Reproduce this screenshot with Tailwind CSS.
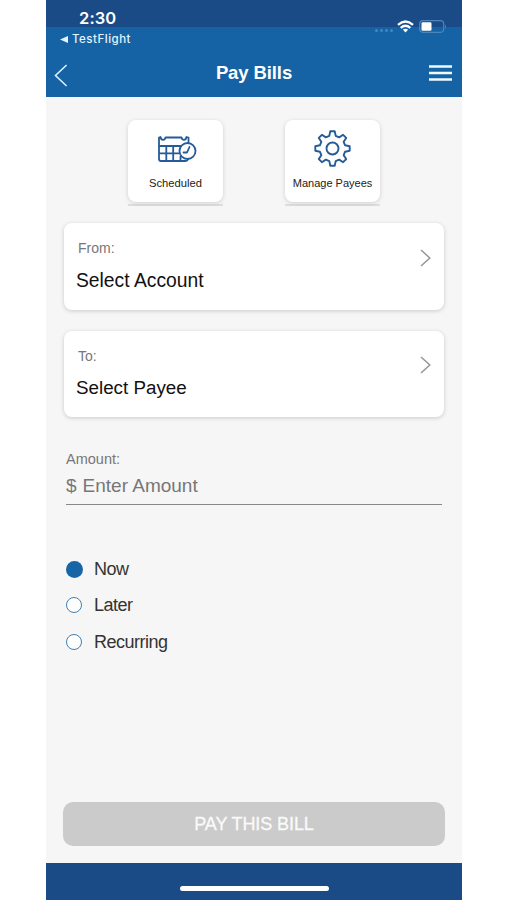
<!DOCTYPE html>
<html lang="en">
<head>
<meta charset="utf-8">
<title>Pay Bills</title>
<script src="https://cdn.jsdelivr.net/npm/@tailwindcss/browser@4"></script>
</head>
<body class="bg-white">
<div class="ml-[46px] flex h-[900px] w-[416px] flex-col overflow-hidden bg-[#f6f6f6] font-['Liberation_Sans',Arial,sans-serif]">
  <header class="flex h-[97px] shrink-0 flex-col bg-linear-to-b from-[#1a4b87] from-[27px] to-[#1563a4] to-[27px] text-white">
    <div class="flex h-[50px] items-start justify-between pr-[15px] pl-[14px] font-['Inter',sans-serif]">
      <div class="pt-[9px]">
        <div class="pl-[19px] text-[16.5px] leading-[18px] font-semibold tracking-[0.1px]">2:30</div>
        <div class="mt-[5px] flex items-center gap-[4px] text-[11.5px] leading-[14px] font-medium tracking-[0.5px] text-[#e3f4ff]">
          <svg class="h-[7px] w-[8px]" viewBox="0 0 8 7" fill="currentColor"><path d="M8 0v7L0 3.5z"/></svg>
          <span>TestFlight</span>
        </div>
      </div>
      <div class="mt-[20px] flex h-[13px] items-center gap-[5px]">
        <div class="mt-[8px] flex gap-[2px]">
          <span class="size-[3px] rounded-full bg-[#4686bd]"></span><span class="size-[3px] rounded-full bg-[#4686bd]"></span><span class="size-[3px] rounded-full bg-[#4686bd]"></span><span class="size-[3px] rounded-full bg-[#4686bd]"></span>
        </div>
        <svg class="-ml-px h-[13px] w-[17px]" viewBox="0 0 17 13" fill="none" stroke="white" stroke-width="2.2"><path d="M1 4.8Q8.5-1.8 16 4.8M3.7 7.8Q8.5 3.7 13.3 7.8"/><path d="M5.9 9.8Q8.5 7.9 11.1 9.8L8.5 12.5z" fill="white" stroke="none"/></svg>
        <svg class="h-[13px] w-[28px]" viewBox="0 0 28 13" fill="none"><rect x=".7" y=".7" width="24" height="11.6" rx="3.2" stroke="#4a86bb" stroke-width="1.2"/><rect x="2.5" y="2.3" width="10" height="8.4" rx="1.3" fill="white"/><path d="M26 4.2q2 2.3 0 4.6z" fill="#4a86bb"/></svg>
      </div>
    </div>
    <div class="grid h-[45px] grid-cols-[1fr_auto_1fr] items-center pr-[10px] pl-[8px]">
      <svg class="mt-[6px] h-[23px] w-[14px]" viewBox="0 0 14 23" fill="none" stroke="#d9f0ff" stroke-width="1.6"><path d="M12.6 1L1.5 11.5 12.6 22"/></svg>
      <h1 class="pl-[2px] text-[18.5px] leading-[22px] font-bold tracking-[-0.1px]">Pay Bills</h1>
      <svg class="h-[16px] w-[23px] justify-self-end" viewBox="0 0 23 16" fill="none" stroke="#effaff" stroke-width="2.3"><path d="M0 1.500H23M0 8H23M0 14.500H23"/></svg>
    </div>
  </header>

  <main class="flex grow flex-col px-[18px] pt-[23px]">
    <div class="flex gap-[62px] pl-[64px] text-[11px] leading-[14px] text-[#222]">
      <div class="border-b-2 border-[#dedede] pb-[2px]">
        <div class="flex h-[82px] w-[95px] flex-col items-center rounded-[8px] bg-white pt-[15px] shadow-[0_1px_4px_rgba(0,0,0,0.16)]">
          <svg class="ml-[3px] h-[29px] w-[40px]" viewBox="0 0 40 29" fill="none" stroke="#245b98" stroke-width="1.8" stroke-linejoin="round" stroke-linecap="round"><path d="M28.500 26H4Q2 26 2 24V2.500L3.500 2Q4 4.800 6 4.800T8.500 2.500H24.500Q25 4.800 27 4.800T29.500 2L31.500 2.500V7M2 11H23.500M2 18.300H22M9.300 11V26M16.200 11V26M23.500 21.500V26M28.500 26Q30.500 26 31 24.500"/><circle cx="30.5" cy="16" r="8" fill="white"/><path d="M26.500 17.500H30L32.500 12"/></svg>
          <span class="mt-[12px] text-[11.2px]">Scheduled</span>
        </div>
      </div>
      <div class="border-b-2 border-[#dedede] pb-[2px]">
        <div class="flex h-[82px] w-[95px] flex-col items-center rounded-[8px] bg-white pt-[10px] shadow-[0_1px_4px_rgba(0,0,0,0.16)]">
          <svg class="h-[37px] w-[37px]" viewBox="-18.5 -18.5 37 37" fill="none" stroke="#245b98" stroke-width="1.9" stroke-linejoin="round"><circle r="6"/><path d="M-3.2-12.6L-2.2-17.2H2.2L3.2-12.6 6.650-11.170 10.600-13.700 13.700-10.600 11.170-6.650 12.600-3.200 17.200-2.200V2.200L12.600 3.200 11.170 6.650 13.700 10.600 10.600 13.700 6.650 11.170 3.200 12.600 2.200 17.200H-2.200L-3.200 12.600-6.650 11.170-10.600 13.700-13.700 10.600-11.170 6.650-12.600 3.200-17.200 2.200V-2.200L-12.600-3.200-11.170-6.650-13.700-10.600-10.600-13.700-6.650-11.170z"/></svg>
          <span class="mt-[9px] whitespace-nowrap">Manage Payees</span>
        </div>
      </div>
    </div>

    <section class="mt-[17px] flex h-[87px] w-[380px] shrink-0 justify-between rounded-[8px] bg-white pr-[13px] pl-[12px] shadow-[0_1px_4px_rgba(0,0,0,0.18)]">
      <div class="pt-[16px]">
        <div class="pl-[2px] text-[14px] leading-[18px] text-[#777]">From:</div>
        <div class="mt-[12px] text-[19.3px] leading-[24px] text-[#111]">Select Account</div>
      </div>
      <svg class="mt-[26px] h-[18px] w-[11px]" viewBox="0 0 11 18" fill="none" stroke="#969696" stroke-width="1.5"><path d="M1 1L9.8 9 1 17"/></svg>
    </section>

    <section class="mt-[21px] flex h-[86px] w-[380px] shrink-0 justify-between rounded-[8px] bg-white pr-[13px] pl-[12px] shadow-[0_1px_4px_rgba(0,0,0,0.18)]">
      <div class="pt-[16px]">
        <div class="pl-[2px] text-[14px] leading-[18px] text-[#777]">To:</div>
        <div class="mt-[11px] text-[18.8px] leading-[24px] text-[#111]">Select Payee</div>
      </div>
      <svg class="mt-[25px] h-[18px] w-[11px]" viewBox="0 0 11 18" fill="none" stroke="#969696" stroke-width="1.5"><path d="M1 1L9.8 9 1 17"/></svg>
    </section>

    <div class="mx-[2px] mt-[33px] w-[376px] border-b border-[#888] pb-[6px] text-[#777]">
      <div class="text-[14.5px] leading-[18px]">Amount:</div>
      <div class="mt-[6px] flex gap-[6px] text-[19px] leading-[24px]"><span>$</span><span>Enter Amount</span></div>
    </div>

    <div class="mt-[52px] flex flex-col gap-[12.4px] pl-[2px] text-[18px] leading-[24px] tracking-[-0.5px] text-[#333]">
      <div class="flex items-center gap-[11px]"><span class="size-[17px] rounded-full bg-[#1865a6]"></span><span>Now</span></div>
      <div class="flex items-center gap-[12px]"><span class="size-[16px] rounded-full border-[1.5px] border-[#417eb4] bg-white"></span><span>Later</span></div>
      <div class="flex items-center gap-[12px]"><span class="size-[16px] rounded-full border-[1.5px] border-[#417eb4] bg-white"></span><span>Recurring</span></div>
    </div>

    <button class="mt-auto mb-[17px] -ml-px h-[44px] w-[382px] shrink-0 rounded-[10px] bg-[#cbcbcb] text-[18px] tracking-[-0.1px] text-[#fafafa] [-webkit-text-stroke:0.3px_#fafafa]">PAY THIS BILL</button>
  </main>

  <footer class="flex h-[37px] shrink-0 justify-center bg-[#1a4b87] pt-[23px]">
    <div class="h-[5px] w-[149px] rounded-full bg-white"></div>
  </footer>
</div>
</body>
</html>
